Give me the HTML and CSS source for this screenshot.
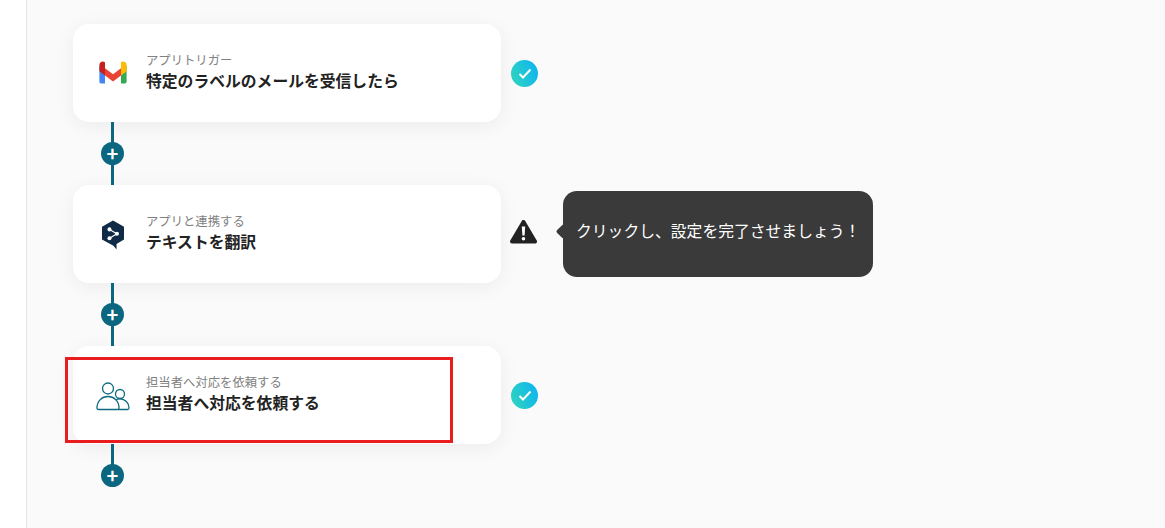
FILE: index.html
```html
<!DOCTYPE html>
<html lang="ja">
<head>
  <meta charset="UTF-8" />
  <meta name="viewport" content="width=device-width, initial-scale=1.0" />
  <title>フローボット</title>
  <link rel="stylesheet" href="styles.css">
</head>
<body>
  <aside class="side"></aside>

  <main class="canvas">
    <!-- step 1 -->
    <div class="step">
      <div class="card">
        <svg class="app-icon" viewBox="-5 -5 50 50">
          <path d="M3 31V11.500L8 9l2 5v19H5a2 2 0 0 1-2-2z" fill="#4285f4"/>
          <path d="M30 33V14l2-5 5 2.500V31a2 2 0 0 1-2 2z" fill="#34a853"/>
          <path d="M10 14v9l10 7.500L30 23v-9l-10 7.500z" fill="#ea4335"/>
          <path d="M3 11.500V10c0-3.500 4-5.500 6.800-3.400L10 6.800V23l-7-5.200z" fill="#c5221f"/>
          <path d="M30 6.800l.2-.2C33 4.500 37 6.500 37 10v8l-7 5z" fill="#fbbc04"/>
        </svg>
        <div class="card-text">
          <div class="card-label">アプリトリガー</div>
          <div class="card-title">特定のラベルのメールを受信したら</div>
        </div>
      </div>
      <svg class="status" viewBox="0 0 27 27">
        <use href="#check-badge"/>
      </svg>
    </div>

    <div class="link"><span class="add">+</span></div>

    <!-- step 2 -->
    <div class="step">
      <div class="card">
        <svg class="app-icon" viewBox="-2.750 -4 45.500 45.500">
          <path d="M20 3.500L32.500 10.500V25L24 30v6.500L20.500 32 7.500 25V10.500z" fill="#0f2b46"/>
          <circle cx="16" cy="13.500" r="2.300" fill="#fff"/>
          <circle cx="16" cy="23.500" r="2.300" fill="#fff"/>
          <circle cx="24.500" cy="18.500" r="2.300" fill="#fff"/>
          <path d="M16 13.500l8.500 5-8.500 5" fill="none" stroke="#fff" stroke-width="1.300"/>
        </svg>
        <div class="card-text">
          <div class="card-label">アプリと連携する</div>
          <div class="card-title">テキストを翻訳</div>
        </div>
      </div>
      <svg class="status status-warn" viewBox="0 0 27 24">
        <path d="M13.500 2L25 21.500H2z" fill="#222" stroke="#222" stroke-width="4" stroke-linejoin="round"/>
        <path d="M11.800 6.500h3.400l-.6 9h-2.200z" fill="#fff"/>
        <circle cx="13.500" cy="18.700" r="1.800" fill="#fff"/>
      </svg>
      <div class="tip">クリックし、設定を完了させましょう！</div>
    </div>

    <div class="link"><span class="add">+</span></div>

    <!-- step 3 -->
    <div class="step">
      <div class="card">
        <svg class="app-icon" viewBox="0 -2 40 40" fill="none" stroke="#0f6a80" stroke-width="1.300">
          <circle cx="15" cy="11.500" r="5.500"/>
          <circle cx="27" cy="17" r="4.500"/>
          <path d="M4 31c0-7 5-11.500 11-11.500S26 24 26 31c0 1-.5 1.500-1.500 1.500h-19C4.500 32.500 4 32 4 31z"/>
          <path d="M22.500 23c1.300-.8 2.900-1.200 4.500-1.200 5 0 9 4.200 9 9.200 0 1-.5 1.500-1.500 1.500H25"/>
        </svg>
        <div class="card-text">
          <div class="card-label">担当者へ対応を依頼する</div>
          <div class="card-title">担当者へ対応を依頼する</div>
        </div>
      </div>
      <svg class="status" viewBox="0 0 27 27">
        <use href="#check-badge"/>
      </svg>
    </div>

    <div class="link link-end"><span class="add">+</span></div>
  </main>

  <div class="highlight"></div>

  <svg class="defs" width="0" height="0">
    <defs>
      <linearGradient id="badge-fill" x1="0" y1="0.700" x2="1" y2="0.300">
        <stop offset="0" stop-color="#2dd4bf"/>
        <stop offset="1" stop-color="#0fb4f0"/>
      </linearGradient>
      <g id="check-badge">
        <circle cx="13.500" cy="13.500" r="13.500" fill="url(#badge-fill)"/>
        <path d="M8.500 14l3.500 3.500 7.500-8" fill="none" stroke="#fff" stroke-width="2"/>
      </g>
    </defs>
  </svg>
</body>
</html>
```

FILE: styles.css
```css
html, body {
  margin: 0;
  padding: 0;
  height: 100%;
}
body {
  display: flex;
  min-height: 528px;
  overflow: hidden;
  background: #fafafa;
  font-family: "Noto Sans CJK JP", "Noto Sans", sans-serif;
  color: #222;
}
.side {
  width: 26px;
  flex: none;
  background: #fff;
  border-right: 1px solid #e4e4e4;
}
.canvas {
  flex: 1;
  padding: 24px 0 0 46px;
}
.step {
  display: flex;
  align-items: center;
}
.card {
  width: 428px;
  height: 98px;
  flex: none;
  box-sizing: border-box;
  padding-left: 20px;
  display: flex;
  align-items: center;
  gap: 13px;
  background: #fff;
  border-radius: 16px;
  box-shadow: 0 4px 20px rgba(0, 0, 0, 0.06);
}
.app-icon {
  width: 40px;
  height: 40px;
  flex: none;
  margin-top: -1px;
}
.card-text {
  margin-top: -3px;
}
.card-label {
  font-size: 12.35px;
  line-height: 17px;
  color: #808080;
}
.card-title {
  font-size: 15.8px;
  line-height: 23px;
  font-weight: 700;
  color: #222;
}
.status {
  width: 27px;
  height: 27px;
  flex: none;
  margin-left: 10px;
}
.status-warn {
  height: 24px;
  margin: 0 1px 4px 9px;
}
.tip {
  position: relative;
  box-sizing: border-box;
  width: 310px;
  height: 86px;
  margin-left: 25px;
  padding: 0 0 8px 13px;
  display: flex;
  align-items: center;
  background: #3a3a3a;
  border-radius: 14px;
  color: #fff;
  font-size: 15.8px;
}
.tip::before {
  content: "";
  position: absolute;
  left: -5px;
  top: 35px;
  width: 11px;
  height: 11px;
  background: #3a3a3a;
  border-radius: 2px;
  transform: rotate(45deg);
}
.link {
  position: relative;
  width: 79px;
  height: 63px;
  display: flex;
  align-items: center;
  justify-content: center;
}
.link::before {
  content: "";
  position: absolute;
  left: 38px;
  top: 0;
  bottom: 0;
  width: 3px;
  background: #0b6680;
}
.link-end {
  height: 43px;
  align-items: flex-end;
}
.link-end::before {
  bottom: 10px;
}
.add {
  position: relative;
  width: 23px;
  height: 23px;
  border-radius: 50%;
  background: #0b6680;
  color: #fff;
  font-size: 20px;
  font-weight: 700;
  line-height: 22px;
  text-align: center;
}
.highlight {
  position: absolute;
  left: 65px;
  top: 357px;
  width: 382px;
  height: 80px;
  border: 3px solid #ea1c20;
}
.defs {
  position: absolute;
}
```
